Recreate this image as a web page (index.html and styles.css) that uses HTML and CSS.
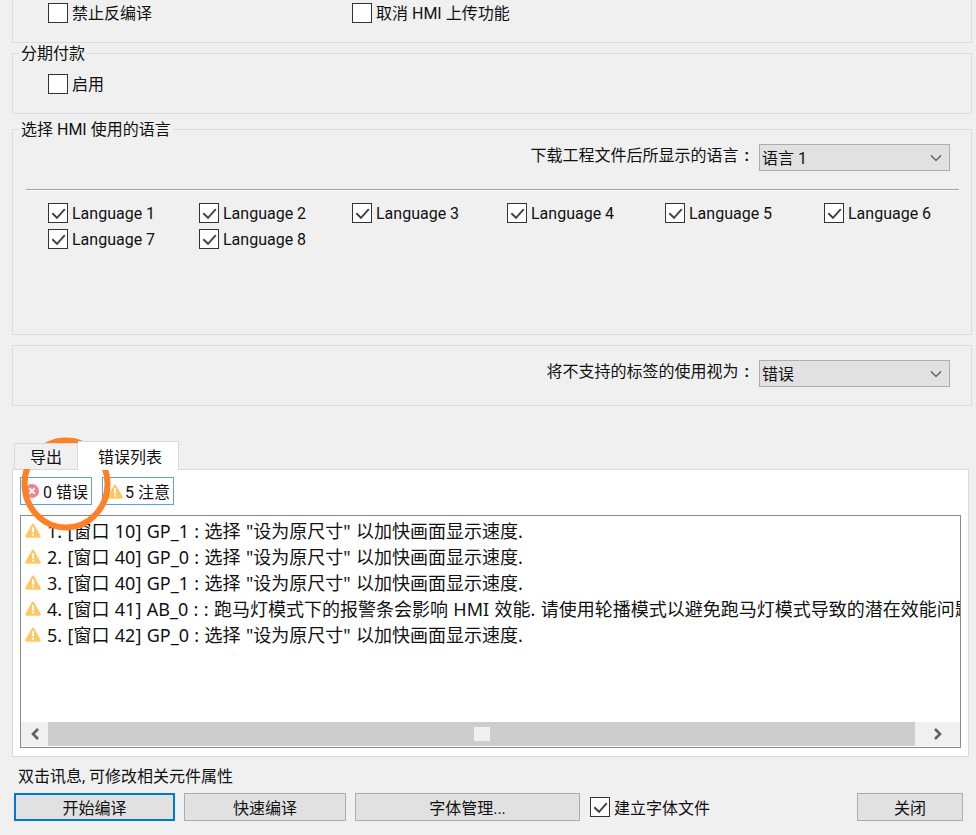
FILE: index.html
```html
<!DOCTYPE html>
<html lang="zh-CN">
<head>
<meta charset="utf-8">
<title>编译</title>
<link rel="stylesheet" href="styles.css">
</head>
<body>
<svg width="0" height="0" class="defs">
  <symbol id="warn" viewBox="0 0 16 15"><path d="M8 .6c.6 0 1 .3 1.300.9l6.300 11.300c.5 1 0 1.900-1.100 1.900H1.500C.4 14.700-.1 13.800.4 12.800L6.700 1.500C7 .9 7.400.6 8 .6z" fill="#ffc766"/><path d="M8 4.200v5.300M8 10.800v1.600" stroke="#fff" stroke-width="2" fill="none"/></symbol>
  <symbol id="err" viewBox="0 0 14 14"><circle cx="7" cy="7" r="7" fill="#f4808b"/><path d="M4.200 4.200l5.600 5.600M9.800 4.200l-5.600 5.600" stroke="#fff" stroke-width="2" fill="none"/></symbol>
  <symbol id="chk" viewBox="0 0 18 18"><path d="M3.300 9.300l4.700 4.500 7.800-8.700" stroke="#444" stroke-width="1.900" fill="none"/></symbol>
  <symbol id="caret" viewBox="0 0 12 8"><path d="M1 1.500l5 5 5-5" stroke="#505050" stroke-width="1.100" fill="none"/></symbol>
</svg>

<main class="dialog">
  <div class="group group-top">
    <div class="top-options">
      <label class="cb cb-wide"><span class="box"></span><span class="raised">禁止反编译</span></label>
      <label class="cb"><span class="box"></span><span class="raised">取消 HMI 上传功能</span></label>
    </div>
  </div>

  <fieldset class="group group-pay">
    <legend>分期付款</legend>
    <label class="cb cb-pay"><span class="box"></span><span class="raised">启用</span></label>
  </fieldset>

  <fieldset class="group group-lang">
    <legend>选择 HMI 使用的语言</legend>
    <div class="select-row">
      <span class="select-label">下载工程文件后所显示的语言<span class="colon">:</span></span>
      <div class="select">语言 1<svg class="caret"><use href="#caret"/></svg></div>
    </div>
    <div class="divider"></div>
    <div class="lang-grid">
      <label class="cb"><span class="box"><svg><use href="#chk"/></svg></span>Language 1</label>
      <label class="cb"><span class="box"><svg><use href="#chk"/></svg></span>Language 2</label>
      <label class="cb"><span class="box"><svg><use href="#chk"/></svg></span>Language 3</label>
      <label class="cb"><span class="box"><svg><use href="#chk"/></svg></span>Language 4</label>
      <label class="cb"><span class="box"><svg><use href="#chk"/></svg></span>Language 5</label>
      <label class="cb"><span class="box"><svg><use href="#chk"/></svg></span>Language 6</label>
      <label class="cb"><span class="box"><svg><use href="#chk"/></svg></span>Language 7</label>
      <label class="cb"><span class="box"><svg><use href="#chk"/></svg></span>Language 8</label>
    </div>
  </fieldset>

  <div class="group group-tags">
    <div class="select-row">
      <span class="select-label">将不支持的标签的使用视为<span class="colon">:</span></span>
      <div class="select">错误<svg class="caret"><use href="#caret"/></svg></div>
    </div>
  </div>

  <div class="tabs">
    <div class="tab">导出</div>
    <div class="tab tab-active">错误列表</div>
  </div>

  <section class="panel">
    <div class="filters">
      <div class="filter"><svg class="ico-err"><use href="#err"/></svg>0 错误</div>
      <div class="filter"><svg class="ico-warn"><use href="#warn"/></svg>5 注意</div>
    </div>
    <div class="list">
      <div class="rows">
        <div class="row"><svg class="ico-warn"><use href="#warn"/></svg>1. [窗口 10] GP_1 : 选择 "设为原尺寸" 以加快画面显示速度.</div>
        <div class="row"><svg class="ico-warn"><use href="#warn"/></svg>2. [窗口 40] GP_0 : 选择 "设为原尺寸" 以加快画面显示速度.</div>
        <div class="row"><svg class="ico-warn"><use href="#warn"/></svg>3. [窗口 40] GP_1 : 选择 "设为原尺寸" 以加快画面显示速度.</div>
        <div class="row"><svg class="ico-warn"><use href="#warn"/></svg>4. [窗口 41] AB_0 : : 跑马灯模式下的报警条会影响 HMI 效能. 请使用轮播模式以避免跑马灯模式导致的潜在效能问题.</div>
        <div class="row"><svg class="ico-warn"><use href="#warn"/></svg>5. [窗口 42] GP_0 : 选择 "设为原尺寸" 以加快画面显示速度.</div>
      </div>
      <div class="scrollbar">
        <div class="sb-btn sb-left"><svg viewBox="0 0 10 12"><path d="M8 1L3 6l5 5" stroke="#606060" stroke-width="2.600" fill="none"/></svg></div>
        <div class="sb-track"><div class="sb-thumb"></div></div>
        <div class="sb-btn sb-right"><svg viewBox="0 0 10 12"><path d="M2 1l5 5-5 5" stroke="#606060" stroke-width="2.600" fill="none"/></svg></div>
      </div>
    </div>
  </section>

  <p class="hint">双击讯息, 可修改相关元件属性</p>

  <div class="actions">
    <button class="btn btn-start">开始编译</button>
    <button class="btn btn-quick">快速编译</button>
    <button class="btn btn-font">字体管理...</button>
    <label class="cb cb-font"><span class="box"><svg><use href="#chk"/></svg></span>建立字体文件</label>
    <button class="btn btn-close">关闭</button>
  </div>
</main>

<svg class="annotation" width="100" height="104" viewBox="0 0 100 104"><ellipse cx="50" cy="50" rx="41.500" ry="43.500" fill="none" stroke="#ff8126" stroke-width="6"/></svg>
</body>
</html>
```

FILE: styles.css
```css
* { box-sizing: border-box; }

html, body {
  margin: 0;
  height: 835px;
  overflow: hidden;
  background: #f0f0f0;
}

body {
  position: relative;
  font-family: Roboto, "Noto Sans CJK SC", sans-serif;
  font-size: 16px;
  color: #111;
}

.defs { position: absolute; }

.raised {
  display: block;
  margin-top: -2px;
}

.dialog {
  display: flex;
  flex-direction: column;
  width: 976px;
  height: 835px;
}

.group {
  margin: 0 4px 0 12px;
  padding: 0;
  border: 1px solid #dcdcdc;
  min-width: 0;
}

.group legend {
  margin-left: 6px;
  padding: 0 2px;
  line-height: 20px;
  transform: translateY(1px);
}

.group-top {
  height: 43px;
  border-top: 0;
  padding: 3px 0 0 35px;
}

.top-options { display: flex; }

.group-pay {
  height: 71px;
  padding: 11px 0 0;
}

.cb-pay { margin-left: 35px; }

.group-lang {
  height: 216px;
  margin-top: 5px;
  padding: 5px 0 0;
}

.group-tags {
  height: 61px;
  margin-top: 10px;
  padding-top: 14px;
}

.cb {
  display: flex;
  align-items: center;
  height: 20px;
  white-space: nowrap;
}

.cb-wide { width: 304px; }

.box {
  flex: none;
  width: 20px;
  height: 20px;
  margin-right: 4px;
  border: 1px solid #333;
  background: #fff;
}

.box svg {
  display: block;
  width: 18px;
  height: 18px;
}

.select-row {
  display: flex;
  justify-content: flex-end;
  align-items: center;
  height: 27px;
  padding-right: 21px;
}

.select-label {
  margin-bottom: 3px;
  line-height: 20px;
}

.colon {
  margin: 0 10px 0 6px;
  font-weight: 700;
}

.select {
  position: relative;
  width: 191px;
  height: 27px;
  padding-left: 2px;
  border: 1px solid #adadad;
  background: #e1e1e1;
  line-height: 27px;
}

.caret {
  position: absolute;
  right: 7px;
  top: 9px;
  width: 12px;
  height: 8px;
}

.divider {
  height: 2px;
  margin: 18px 12px 0 13px;
  border-top: 1px solid #a0a0a0;
  border-bottom: 1px solid #fff;
}

.lang-grid {
  display: grid;
  grid-template-columns: 151px 153px 155px 158px 159px auto;
  grid-auto-rows: 20px;
  row-gap: 6px;
  margin-top: 12px;
  padding-left: 35px;
}

.tabs {
  display: flex;
  align-items: flex-end;
  height: 29px;
  margin: 34px 0 0 14px;
  position: relative;
  z-index: 1;
}

.tab {
  width: 64px;
  height: 26px;
  border: 1px solid #d9d9d9;
  border-bottom: 0;
  padding-left: 15px;
  line-height: 28px;
  background: #f0f0f0;
}

.tab-active {
  width: 101px;
  height: 29px;
  margin-bottom: -1px;
  padding-left: 20px;
  border-left: 0;
  background: #fff;
  line-height: 31px;
}

.panel {
  display: flex;
  flex-direction: column;
  height: 288px;
  margin: 0 7px 0 12px;
  padding: 7px 7px 8px 7px;
  border: 1px solid #d9d9d9;
  background: #fff;
}

.filters {
  display: flex;
  gap: 10px;
}

.filter {
  display: flex;
  align-items: center;
  width: 72px;
  height: 28px;
  border: 1px solid #5aa2e6;
  white-space: nowrap;
}

.ico-err {
  flex: none;
  width: 14px;
  height: 14px;
  margin: 0 4px 0 4px;
}

.ico-warn {
  flex: none;
  width: 16px;
  height: 15px;
  margin: 0 2px 0 4px;
}

.list {
  display: flex;
  flex-direction: column;
  flex: 1;
  min-height: 0;
  margin-top: 10px;
  border: 1px solid #868a91;
  background: #fff;
}

.rows {
  flex: 1;
  min-height: 0;
  padding-top: 1px;
  overflow: hidden;
}

.row {
  display: flex;
  align-items: center;
  height: 26px;
  font-family: "Noto Sans", "Noto Sans CJK SC", sans-serif;
  font-size: 18px;
  word-spacing: 0.7px;
  white-space: nowrap;
}

.row .ico-warn { margin: 0 6px 0 4px; }

.scrollbar {
  display: flex;
  flex: none;
  height: 24px;
  margin-bottom: 1px;
  background: #f0f0f0;
}

.sb-btn {
  display: flex;
  align-items: center;
  justify-content: center;
  flex: none;
}

.sb-btn svg {
  width: 10px;
  height: 12px;
}

.sb-left { width: 27px; }
.sb-right { width: 45px; }

.sb-track {
  display: flex;
  align-items: center;
  flex: 1;
  padding-left: 426px;
  background: #cdcdcd;
}

.sb-thumb {
  width: 16px;
  height: 14px;
  background: #f0f0f0;
}

.hint {
  height: 20px;
  margin: 10px 0 0 18px;
  line-height: 20px;
}

.actions {
  display: flex;
  align-items: center;
  height: 28px;
  margin: 6px 0 0 14px;
}

.btn {
  height: 28px;
  padding: 0;
  border: 1px solid #adadad;
  background: #e1e1e1;
  color: #111;
  font: inherit;
}

.btn-start { width: 161px; border: 2px solid #0078d7; }
.btn-quick { width: 162px; margin-left: 9px; }
.btn-font { width: 225px; margin-left: 9px; }
.cb-font { margin-left: 10px; }
.btn-close { width: 106px; margin-left: auto; margin-right: 13px; }

.annotation {
  position: absolute;
  left: 16px;
  top: 434px;
}
```
